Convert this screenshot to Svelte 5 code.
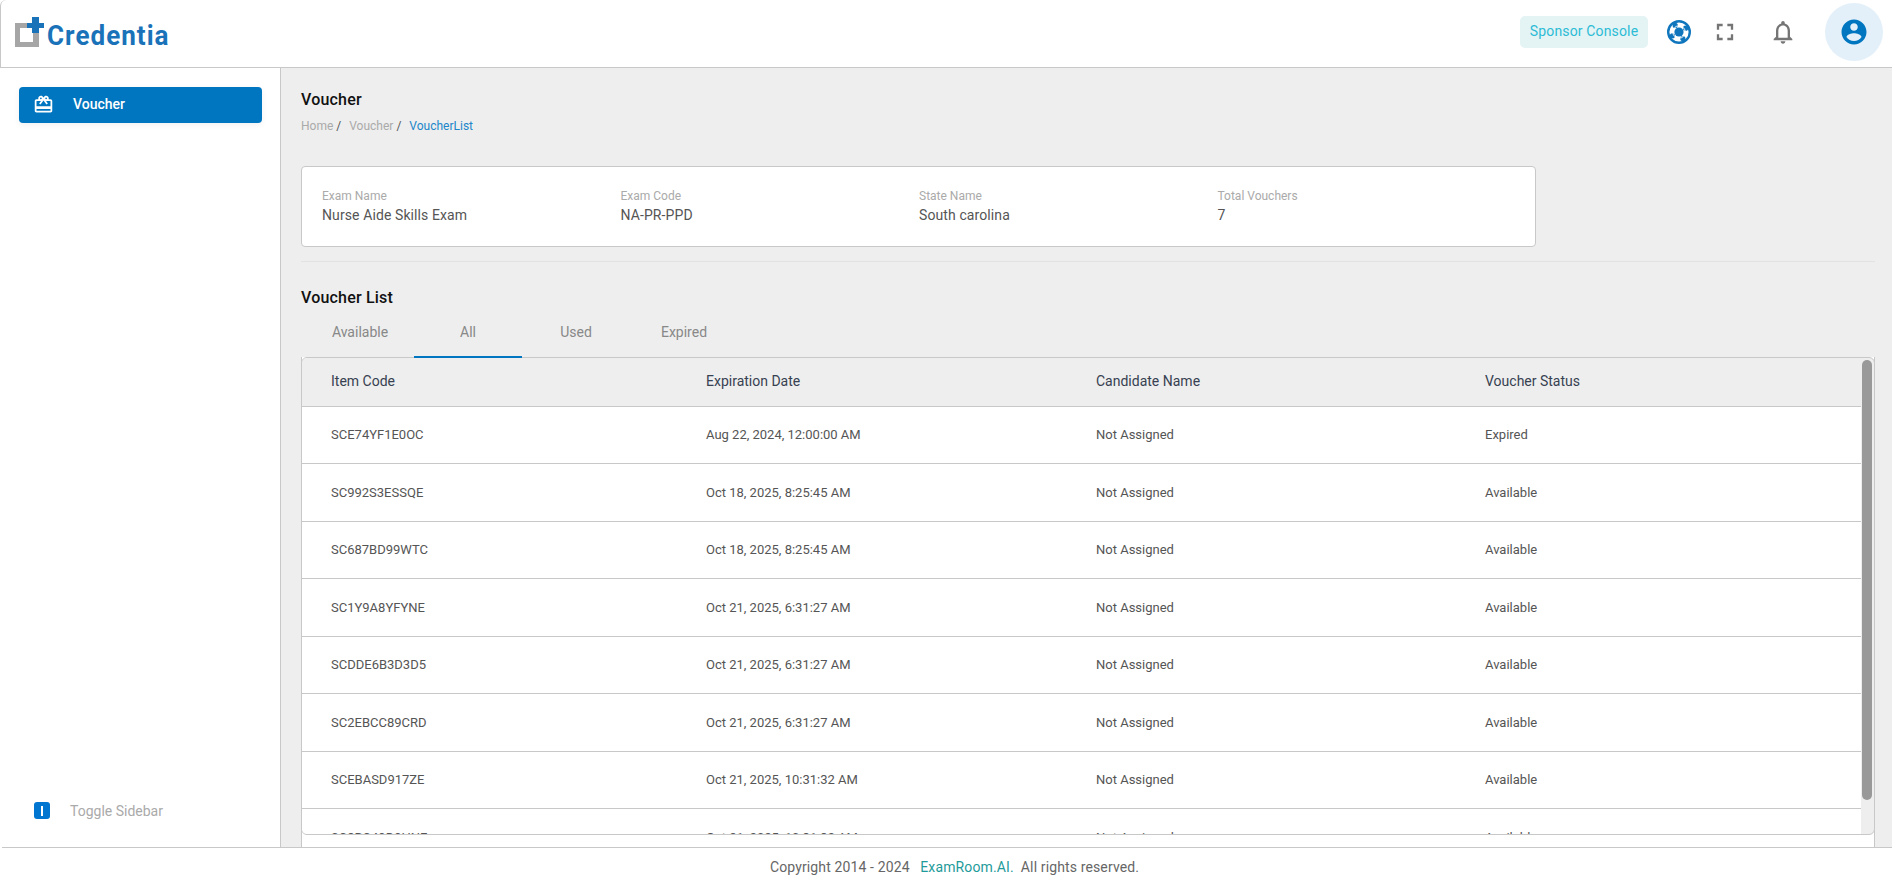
<script lang="ts">
  const info = [
    { label: 'Exam Name', value: 'Nurse Aide Skills Exam' },
    { label: 'Exam Code', value: 'NA-PR-PPD' },
    { label: 'State Name', value: 'South carolina' },
    { label: 'Total Vouchers', value: '7' }
  ]

  const tabs = ['Available', 'All', 'Used', 'Expired']
  const columns = ['Item Code', 'Expiration Date', 'Candidate Name', 'Voucher Status']

  const rows = [
    ['SCE74YF1E0OC', 'Aug 22, 2024, 12:00:00 AM', 'Not Assigned', 'Expired'],
    ['SC992S3ESSQE', 'Oct 18, 2025, 8:25:45 AM', 'Not Assigned', 'Available'],
    ['SC687BD99WTC', 'Oct 18, 2025, 8:25:45 AM', 'Not Assigned', 'Available'],
    ['SC1Y9A8YFYNE', 'Oct 21, 2025, 6:31:27 AM', 'Not Assigned', 'Available'],
    ['SCDDE6B3D3D5', 'Oct 21, 2025, 6:31:27 AM', 'Not Assigned', 'Available'],
    ['SC2EBCC89CRD', 'Oct 21, 2025, 6:31:27 AM', 'Not Assigned', 'Available'],
    ['SCEBASD917ZE', 'Oct 21, 2025, 10:31:32 AM', 'Not Assigned', 'Available'],
    ['SC8BC49D9HNE', 'Oct 21, 2025, 10:31:32 AM', 'Not Assigned', 'Available']
  ]
</script>

<div class="shell">
  <header class="topbar">
    <div class="logo">
      <svg class="logo-mark" viewBox="0 0 30 30" width="30" height="30">
        <path d="M0 6h12v5H5v14h13v-9h6v14H0z" fill="#a6a6a6" />
        <path d="M17 0h7v6h5v5h-5v5h-7v-5h-5V6h5z" fill="#1a72b9" />
      </svg>
      <span class="logo-text">Credentia</span>
    </div>
    <div class="top-actions">
      <button class="console-btn">Sponsor Console</button>
      <svg class="lifebuoy" viewBox="0 0 24 24" width="24" height="24">
        <circle cx="12" cy="12" r="10.8" fill="#fff" stroke="#0f76bd" stroke-width="2.4" />
        <circle cx="12" cy="12" r="4.6" fill="#0f76bd" />
        <g fill="#0f76bd">
          <circle cx="18.6" cy="8.2" r="2.6" />
          <circle cx="15.8" cy="18.6" r="2.6" />
          <circle cx="5.4" cy="15.8" r="2.6" />
          <circle cx="8.2" cy="5.4" r="2.6" />
        </g>
        <circle cx="12" cy="12" r="6.2" fill="none" stroke="#fff" stroke-width="1" />
      </svg>
      <svg class="fullscreen" viewBox="0 0 24 24" width="28" height="28">
        <path fill="#757575" d="M7 14H5v5h5v-2H7v-3zm-2-4h2V7h3V5H5v5zm12 7h-3v2h5v-5h-2v3zM14 5v2h3v3h2V5h-5z" />
      </svg>
      <svg class="bell" viewBox="0 0 24 24" width="28" height="28">
        <path fill="#757575" d="M12 22c1.1 0 2-.9 2-2h-4c0 1.1.9 2 2 2zm6-6v-5c0-3.07-1.63-5.64-4.5-6.32V4c0-.83-.67-1.5-1.5-1.5s-1.5.67-1.5 1.5v.68C7.64 5.36 6 7.92 6 11v5l-2 2v1h16v-1l-2-2zm-2 1H8v-6c0-2.48 1.51-4.5 4-4.5s4 2.02 4 4.5v6z" />
      </svg>
      <div class="avatar">
        <svg viewBox="0 0 24 24" width="30" height="30">
          <path fill="#0076c0" d="M12 2C6.48 2 2 6.48 2 12s4.48 10 10 10 10-4.48 10-10S17.52 2 12 2zm0 3c1.66 0 3 1.34 3 3s-1.34 3-3 3-3-1.34-3-3 1.34-3 3-3zm0 14.2c-2.5 0-4.71-1.28-6-3.22.03-1.99 4-3.08 6-3.08 1.99 0 5.97 1.09 6 3.08-1.29 1.94-3.5 3.22-6 3.22z" />
        </svg>
      </div>
    </div>
  </header>

  <div class="body">
    <aside class="sidebar">
      <div class="nav-item">
        <svg viewBox="0 0 24 24" width="21" height="21">
          <path fill="#fff" d="M20 6h-2.18c.11-.31.18-.65.18-1 0-1.66-1.34-3-3-3-1.05 0-1.96.54-2.5 1.35l-.5.67-.5-.68C10.96 2.54 10.05 2 9 2 7.34 2 6 3.34 6 5c0 .35.07.69.18 1H4c-1.11 0-1.99.89-1.99 2L2 19c0 1.11.89 2 2 2h16c1.11 0 2-.89 2-2V8c0-1.11-.89-2-2-2zm-5-2c.55 0 1 .45 1 1s-.45 1-1 1-1-.45-1-1 .45-1 1-1zM9 4c.55 0 1 .45 1 1s-.45 1-1 1-1-.45-1-1 .45-1 1-1zm11 15H4v-2h16v2zm0-5H4V8h5.08L7 10.83 8.62 12 12 7.4l3.38 4.6L17 10.83 14.92 8H20v6z" />
        </svg>
        <span>Voucher</span>
      </div>
      <div class="toggle">
        <span class="toggle-icon"><i></i></span>
        <span>Toggle Sidebar</span>
      </div>
    </aside>

    <main class="content">
      <h1>Voucher</h1>
      <nav class="crumbs">
        <span>Home</span><b>/</b>
        <span>Voucher</span><b>/</b>
        <span class="current">VoucherList</span>
      </nav>

      <section class="info-card">
        {#each info as item}
          <div class="info-col">
            <div class="info-label">{item.label}</div>
            <div class="info-value">{item.value}</div>
          </div>
        {/each}
      </section>
      <div class="divider"></div>

      <h2>Voucher List</h2>
      <div class="tabs">
        {#each tabs as tab}
          <div class="tab" class:active={tab === 'All'}>{tab}</div>
        {/each}
      </div>

      <div class="table-card">
        <div class="table-frame">
          <div class="table-clip">
            <table>
              <thead>
                <tr>
                  {#each columns as col}
                    <th>{col}</th>
                  {/each}
                </tr>
              </thead>
              <tbody>
                {#each rows as row}
                  <tr>
                    {#each row as cell}
                      <td>{cell}</td>
                    {/each}
                  </tr>
                {/each}
              </tbody>
            </table>
          </div>
          <div class="scroll-track"><div class="scroll-thumb"></div></div>
        </div>
      </div>
    </main>
  </div>

  <footer class="footer">
    Copyright 2014 - 2024 <span class="brand">ExamRoom.AI.</span> <span class="rights">All rights reserved.</span>
  </footer>
</div>

<style>
  :global(body) {
    margin: 0;
    background: #fff;
  }

  .shell {
    height: 883px;
    display: flex;
    flex-direction: column;
    overflow: hidden;
    font-family: Roboto, "Liberation Sans", sans-serif;
  }

  .topbar {
    height: 68px;
    box-sizing: border-box;
    flex-shrink: 0;
    display: flex;
    align-items: center;
    justify-content: space-between;
    padding: 0 9px 3px 14px;
    background: #fff;
    border-left: 1px solid #c8c8c8;
    border-bottom: 1px solid #c8c8c8;
    border-top-left-radius: 6px;
  }

  .logo {
    display: flex;
    align-items: flex-start;
    margin-top: 4px;
  }

  .logo-mark {
    overflow: visible;
  }

  .logo-text {
    font-size: 28px;
    line-height: 30px;
    font-weight: 700;
    letter-spacing: 1.1px;
    color: #1a72b9;
    margin: 4px 0 0 2px;
    transform: scaleX(0.93);
    transform-origin: left;
  }

  .top-actions {
    display: flex;
    align-items: center;
  }

  .console-btn {
    width: 128px;
    height: 32px;
    border: 0;
    border-radius: 5px;
    background: #e4f3f4;
    color: #2cbcd6;
    font-family: inherit;
    font-size: 14px;
    letter-spacing: 0.15px;
    padding: 0 0 2px;
  }

  .lifebuoy {
    margin-left: 19px;
  }

  .fullscreen {
    margin-left: 20px;
  }

  .bell {
    margin-left: 30px;
  }

  .avatar {
    width: 58px;
    height: 58px;
    margin-left: 28px;
    border-radius: 50%;
    background: #e3f0f9;
    display: flex;
    align-items: center;
    justify-content: center;
  }

  .body {
    flex: 1;
    min-height: 0;
    display: flex;
  }

  .sidebar {
    width: 281px;
    flex-shrink: 0;
    box-sizing: border-box;
    background: #fff;
    border-right: 1px solid #c8c8c8;
    padding: 19px 19px 0;
    display: flex;
    flex-direction: column;
  }

  .nav-item {
    height: 36px;
    width: 243px;
    display: flex;
    align-items: center;
    gap: 19px;
    padding: 0 0 2px 14px;
    box-sizing: border-box;
    border-radius: 4px;
    background: #0076c0;
    color: #fff;
    font-size: 14px;
    font-weight: 500;
    box-shadow: 0 2px 6px rgba(0, 0, 0, 0.06);
  }

  .toggle {
    margin-top: auto;
    margin-bottom: 28px;
    margin-left: 15px;
    display: flex;
    align-items: center;
    gap: 20px;
    color: #aaa;
    font-size: 14px;
  }

  .toggle-icon {
    width: 16px;
    height: 17px;
    border-radius: 3px;
    background: #0076d0;
    display: flex;
    align-items: center;
    justify-content: center;
  }

  .toggle-icon i {
    width: 2px;
    height: 10px;
    background: #fff;
  }

  .content {
    flex: 1;
    min-width: 0;
    background: #eee;
    padding: 22px 17px 0 20px;
    display: flex;
    flex-direction: column;
  }

  h1,
  h2 {
    margin: 0;
    font-size: 16px;
    line-height: 20px;
    font-weight: 500;
    color: #111;
    letter-spacing: 0.2px;
  }

  .crumbs {
    margin-top: 9px;
    font-size: 12px;
    line-height: 14px;
    color: #aaa;
    display: flex;
  }

  .crumbs b {
    font-weight: 400;
    color: #555;
    margin: 0 8px 0 3px;
  }

  .crumbs .current {
    color: #2186c9;
  }

  .info-card {
    margin-top: 33px;
    width: 1235px;
    height: 81px;
    box-sizing: border-box;
    border: 1px solid #c8c8c8;
    border-radius: 4px;
    background: #fff;
    padding: 22px 20px 0;
    display: grid;
    grid-template-columns: repeat(4, 298.5px);
  }

  .info-label {
    font-size: 12px;
    line-height: 14px;
    color: #aaa;
  }

  .info-value {
    margin-top: 3px;
    font-size: 14px;
    line-height: 18px;
    color: #555;
    letter-spacing: 0.1px;
  }

  .divider {
    height: 1px;
    margin-top: 14px;
    background: #e2e2e2;
  }

  h2 {
    margin-top: 26px;
  }

  .tabs {
    margin-top: 7px;
    height: 42px;
    padding-left: 5px;
    display: flex;
    flex-shrink: 0;
  }

  .tab {
    width: 108px;
    display: flex;
    align-items: center;
    justify-content: center;
    font-size: 14px;
    color: #888;
    box-sizing: border-box;
    position: relative;
    z-index: 1;
    padding-bottom: 8px;
  }

  .tab.active {
    border-bottom: 2px solid #0076c0;
    margin-bottom: -1px;
    padding-bottom: 7px;
  }

  .table-card {
    flex: 1;
    min-height: 0;
    display: flex;
    flex-direction: column;
    background: #fff;
    border-left: 1px solid #c8c8c8;
    border-right: 1px solid #c8c8c8;
    padding-bottom: 12px;
  }

  .table-frame {
    flex: 1;
    min-height: 0;
    display: flex;
    margin: 0 -1px;
    background: #eee;
    border: 1px solid #c8c8c8;
    border-radius: 6px;
    overflow: hidden;
  }

  .table-clip {
    flex: 1;
    min-width: 0;
    overflow: hidden;
  }

  .scroll-track {
    width: 13px;
    flex-shrink: 0;
    padding: 2px 2px 0 1px;
    box-sizing: border-box;
  }

  .scroll-thumb {
    height: 440px;
    border-radius: 5px;
    background: #999;
  }

  table {
    width: 100%;
    border-collapse: collapse;
    table-layout: fixed;
  }

  th,
  td {
    box-sizing: border-box;
    padding: 0 0 0 24px;
    border-bottom: 1px solid #c8c8c8;
  }

  th {
    height: 48px;
    padding-bottom: 2px;
    text-align: left;
    font-size: 14px;
    font-weight: 400;
    color: #374151;
    background: #eee;
  }

  th:nth-child(1) {
    width: 380px;
  }

  th:nth-child(2) {
    width: 390px;
  }

  th:nth-child(3) {
    width: 389px;
  }

  td {
    height: 57.5px;
    font-size: 13px;
    color: #555;
    background: #fff;
  }

  th:nth-child(1),
  td:nth-child(1) {
    padding-left: 29px;
  }

  .footer {
    height: 36px;
    flex-shrink: 0;
    box-sizing: border-box;
    margin-left: 2px;
    border-top: 1px solid #c8c8c8;
    background: #fff;
    display: flex;
    align-items: center;
    justify-content: center;
    font-size: 14px;
    letter-spacing: 0.13px;
    color: #666;
    padding: 3px 0 0 15px;
    white-space: pre;
  }

  .brand {
    color: #1f9b9b;
    margin-left: 7px;
  }

  .rights {
    margin-left: 7px;
  }
</style>
